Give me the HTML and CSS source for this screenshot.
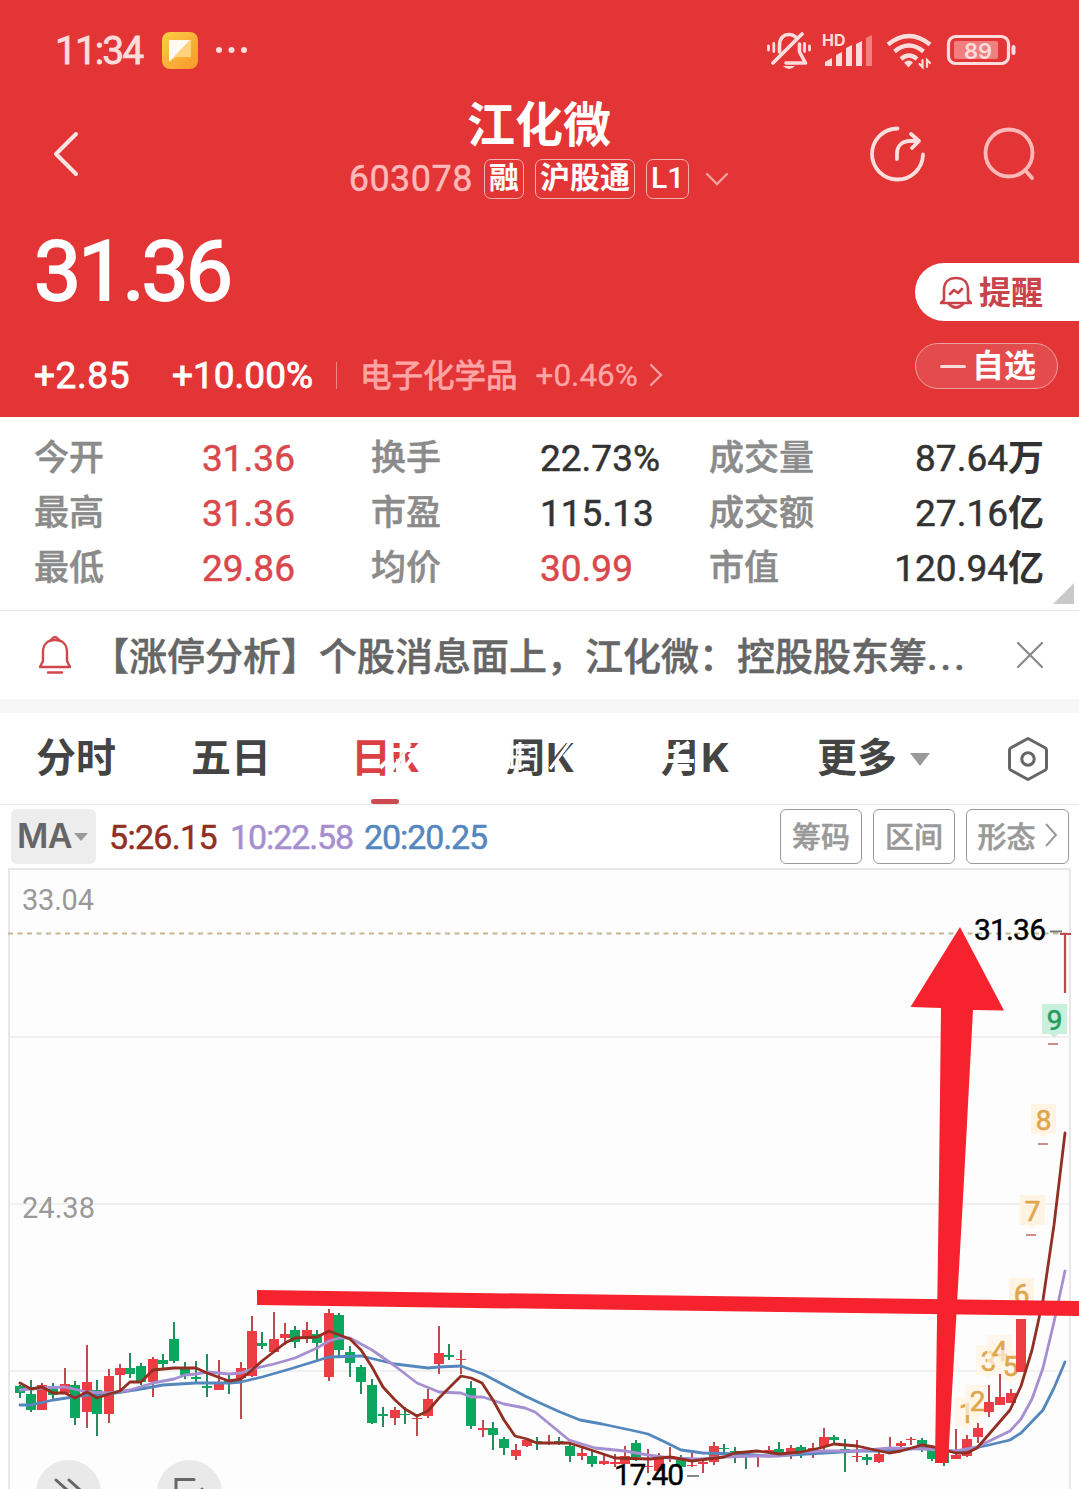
FILE: index.html
```html
<!DOCTYPE html>
<html lang="zh-CN">
<head>
    <meta charset="UTF-8">
    <meta name="viewport" content="width=device-width, initial-scale=1.0">
    <title>江化微 603078</title>
    <link rel="stylesheet" href="styles.css">
</head>
<body>
    <header>
        <div class="status-bar">
            <span class="time">11:34</span>
            <svg class="app-icon" width="36" height="37" viewBox="0 0 36 37">
                <defs>
                    <linearGradient id="sun" x1="0" y1="0" x2="1" y2="1">
                        <stop offset="0" stop-color="#f9cf45"/>
                        <stop offset="1" stop-color="#fb962c"/>
                    </linearGradient>
                </defs>
                <rect width="36" height="37" rx="8" fill="url(#sun)"/>
                <path d="M7 8h22v17H14L7 30z" fill="#ffd27c"/>
                <path d="M7 8h21L7 30z" fill="#fffaf0"/>
            </svg>
            <svg class="dots" width="34" height="8" viewBox="0 0 34 8" fill="#ffdcdc">
                <circle cx="3" cy="4" r="3"/><circle cx="15.500" cy="4" r="3"/><circle cx="28" cy="4" r="3"/>
            </svg>
            <svg class="status-icons" width="252" height="42" viewBox="765 29 252 42" fill="none" stroke="#ffdcdc" stroke-linecap="round">
                <!-- muted bell -->
                <path d="M779.500 52v-6c0-8 4-11.500 9.500-11.500 3 0 5 1 6.500 2.500M799.500 44v8l6 11H786" stroke-width="3.600" stroke-linejoin="round"/>
                <path d="M802 34L773 63" stroke-width="3.800"/>
                <path d="M783 66h12q-6 6-12 0z" fill="#ffdcdc" stroke="none"/>
                <path d="M768.500 46v4M773.800 43.500v8M804.500 43.500v8M809.500 46v4" stroke-width="2.800"/>
                <!-- signal -->
                <g fill="#ffdcdc" stroke="none">
                    <path d="M825 62l7-4v8h-7zM836 55l6-3v14h-6zM846 48l6-3v21h-6zM856 44l6-3v25h-6z"/>
                    <path d="M866 38l6-3v31h-6z" opacity=".45"/>
                </g>
                <!-- wifi -->
                <g stroke-width="4.400">
                    <path d="M888 44.500q21-17 42 0" stroke-linecap="butt"/>
                    <path d="M894.500 51.500q14.500-12 29 0" stroke-linecap="butt"/>
                    <path d="M901 59q8-7 16 0" stroke-linecap="butt"/>
                </g>
                <path d="M904 62.500q5-4 9 0l-4.500 5z" fill="#ffdcdc" stroke="none"/>
                <path d="M922.500 60v7l-3-3M927 67v-7l3 3" stroke-width="2.200"/>
                <!-- battery -->
                <rect x="948.500" y="36.500" width="60" height="27" rx="7" stroke-width="3.200"/>
                <rect x="954" y="41" width="44" height="18" rx="2" fill="#f08080" stroke="none"/>
                <path d="M1013.500 47v6" stroke-width="4"/>
                <text class="hd" x="822" y="46">HD</text>
                <text class="battery" x="964" y="58.500">89</text>
            </svg>
        </div>
        <div class="nav">
            <svg class="back" width="28" height="46" viewBox="0 0 28 46" fill="none" stroke="#ffe4e4" stroke-width="4" stroke-linecap="round" stroke-linejoin="round">
                <path d="M24 3L4 23l20 20"/>
            </svg>
            <div class="title">
                <h1>江化微</h1>
                <div class="code-row">
                    <span class="code">603078</span>
                    <span class="tag">融</span>
                    <span class="tag">沪股通</span>
                    <span class="tag level">L1</span>
                    <svg width="24" height="14" viewBox="0 0 24 14" fill="none" stroke="#f5a0a0" stroke-width="2.400" stroke-linecap="round"><path d="M2 2l10 10L22 2"/></svg>
                </div>
            </div>
            <svg class="share" width="56" height="56" viewBox="0 0 56 56" fill="none" stroke="#ffdede" stroke-width="3.800" stroke-linecap="round">
                <path d="M27.500 2.500A25.500 25.500 0 1 0 53 28.500"/>
                <path d="M27 33v-5c0-9 6-13 13-13h9M41 8l8 7-7 7" stroke-linejoin="round"/>
            </svg>
            <svg class="search" width="54" height="56" viewBox="0 0 54 56" fill="none" stroke="#ffb8b8" stroke-width="3.800" stroke-linecap="round">
                <circle cx="27" cy="27" r="23.500"/>
                <path d="M43 44l7 8"/>
            </svg>
        </div>
        <div class="quote">
            <div class="quote-left">
                <div class="price">31.36</div>
                <div class="change">
                    <span class="diff">+2.85</span>
                    <span class="pct">+10.00%</span>
                    <span class="sector">电子化学品</span>
                    <span class="sector-pct">+0.46%</span>
                    <svg width="14" height="24" viewBox="0 0 14 24" fill="none" stroke="#f5a0a0" stroke-width="2.400" stroke-linecap="round"><path d="M2 2l10 10L2 22"/></svg>
                </div>
            </div>
            <div class="quote-right">
                <div class="pill remind">
                    <svg width="32" height="33" viewBox="0 0 32 33" fill="none" stroke="#c8444a" stroke-width="2.600" stroke-linejoin="round" stroke-linecap="round">
                        <path d="M4 24V14C4 6 9 2 16 2s12 4 12 12v10l3 3H1z"/>
                        <path d="M9 28q7 7 14 0"/>
                        <path d="M10 18l4-4 4 3 4-4"/>
                    </svg>
                    提醒
                </div>
                <div class="pill watch"><i></i>自选</div>
            </div>
        </div>
    </header>

    <section class="metrics">
        <span>今开</span><b class="up">31.36</b><span>换手</span><b>22.73%</b><span>成交量</span><b class="end">87.64<em>万</em></b>
        <span>最高</span><b class="up">31.36</b><span>市盈</span><b>115.13</b><span>成交额</span><b class="end">27.16<em>亿</em></b>
        <span>最低</span><b class="up">29.86</b><span>均价</span><b class="up">30.99</b><span>市值</span><b class="end">120.94<em>亿</em></b>
        <div class="corner"></div>
    </section>

    <section class="notice">
        <svg width="32" height="40" viewBox="0 0 32 40" fill="none" stroke="#d0484e" stroke-width="2.400" stroke-linejoin="round" stroke-linecap="round">
            <path d="M4 26V17C4 9 9 5 16 5s12 4 12 12v9l3 6H1z"/>
            <path d="M12 5q4-6 8 0M9 37.500h14"/>
        </svg>
        <p>【涨停分析】个股消息面上，江化微：控股股东筹<span>...</span></p>
        <svg class="close" width="26" height="26" viewBox="0 0 26 26" stroke="#888" stroke-width="2.200" stroke-linecap="round"><path d="M1 1l24 24M25 1L1 25"/></svg>
    </section>

    <nav class="tabs">
        <span>分时</span>
        <span>五日</span>
        <span class="active">日K</span>
        <span>周K</span>
        <span>月K</span>
        <span>更多<i></i></span>
        <svg class="setting" width="42" height="46" viewBox="0 0 42 46" fill="none" stroke="#666" stroke-width="3" stroke-linejoin="round">
            <path d="M21 2.500L38.500 12q1 1 1 2v18q0 1-1 2L21 43.500 3.500 34q-1-1-1-2V14q0-1 1-2z"/>
            <circle cx="21" cy="23" r="6.200"/>
        </svg>
        <svg class="scratches" width="400" height="50" viewBox="340 735 400 50" fill="none" stroke="#fff" stroke-width="4">
            <path d="M380 768l11-11 2 11 10-12 1 13 9-12M390 750h28M398 759v18M410 744l-6 9"/>
            <path d="M505 747h26M504 757h26M504 767h20M512 739v30M520 742v28M550 769l20-27M508 776l20-4" stroke-width="3"/>
            <path d="M662 751h15l12-9M664 761h30M678 742l-4 35M682 769h10"/>
        </svg>
    </nav>

    <section class="toolbar">
        <span class="ma-select">MA<i></i></span>
        <span class="ma5">5:26.15</span>
        <span class="ma10">10:22.58</span>
        <span class="ma20">20:20.25</span>
        <div class="buttons">
            <button>筹码</button>
            <button>区间</button>
            <button class="wide">形态<svg width="13" height="24" viewBox="0 0 13 24" fill="none" stroke="#999" stroke-width="2"><path d="M1 1l10 11L1 23"/></svg></button>
        </div>
    </section>

    <svg class="chart" id="chart" width="1079" height="622" viewBox="0 867 1079 622">
        <path class="frame" d="M9 1489V869H1070V1489"/>
        <path class="grid" d="M10 1037H1069M10 1204H1069M10 1371H1069"/>
        <text class="axis" x="22" y="910" textLength="72">33.04</text>
        <text class="axis" x="22" y="1218" textLength="73">24.38</text>
        <g id="marks"></g>
        <g id="candles"></g>
        <path class="limit" d="M8 933.500H1072"/>
        <path d="M1050 931.500h12" stroke="#777" stroke-width="2"/>
        <path d="M1060 934h11M1065 934v59" stroke="#bd4b50" stroke-width="2.200"/>
        <g id="lines"></g>
        <text class="extreme" x="974" y="940" textLength="72">31.36</text>
        <text class="extreme" x="614" y="1485" textLength="70">17.40</text>
        <path d="M687 1476h12" stroke="#888" stroke-width="2"/>
        <circle cx="68.500" cy="1492.500" r="32.500" fill="#e9e9e9"/>
        <path class="tool" d="M56 1480l20 18M69 1480l20 18"/>
        <circle cx="189.500" cy="1492.500" r="32.500" fill="#e9e9e9"/>
        <path class="tool" d="M176 1498v-18.500h18M202 1489v8"/>
        <!-- hand drawn resistance line and arrow -->
        <path class="drawn" d="M257 1290L1079 1301V1316L257 1305z"/>
        <path class="drawn" d="M960 927L1004 1010.500 973 1010 964 1180 948 1463H935L939 1180 941 1008 910.500 1007z"/>
    </svg>
    <script src="app.js"></script>
</body>
</html>
```
FILE: styles.css
```css
* {
    box-sizing: border-box;
}

body {
    margin: 0;
    width: 1079px;
    height: 1489px;
    overflow: hidden;
    background: #fff;
    color: #333;
    font-family: Roboto, 'Noto Sans CJK SC', sans-serif;
}

header {
    height: 417px;
    background: #e33536;
    color: #fff;
}

.status-bar {
    display: flex;
    align-items: center;
    height: 96px;
    padding: 4px 62px 0 55px;
}

.time {
    width: 107px;
    padding-top: 2px;
    font-size: 39px;
    letter-spacing: -2px;
    color: #ffdcdc;
    -webkit-text-stroke: .8px;
}

.dots {
    margin-left: 18px;
}

.status-icons {
    margin-left: auto;
}

.hd {
    font: 700 16px Inter, sans-serif;
    fill: #ffdcdc;
    stroke: none;
}

.battery {
    font: 600 22px Inter, sans-serif;
    fill: #ffdcdc;
    stroke: none;
}

.nav {
    display: grid;
    grid-template-columns: 28px 1fr 56px 54px;
    align-items: center;
    height: 108px;
    padding: 8px 43px 0 52px;
}

.title {
    display: flex;
    flex-direction: column;
    align-items: center;
    gap: 6px;
    margin-top: -10px;
    padding-left: 72px;
}

.title h1 {
    margin: 0;
    font-size: 48px;
    line-height: 54px;
    font-weight: 700;
}

.share {
    margin-left: -56px;
}

.code-row {
    display: flex;
    align-items: center;
    gap: 11px;
    height: 40px;
}

.code {
    font-size: 36px;
    letter-spacing: .5px;
    color: #ffb9b9;
    -webkit-text-stroke: .4px;
}

.tag {
    height: 40px;
    padding: 0 4px;
    border: 1.5px solid #f5b0b0;
    border-radius: 7px;
    font-size: 30px;
    line-height: 35px;
    font-weight: 700;
}

.level {
    font-weight: 500;
}

.code-row svg {
    margin-left: 5px;
}

.quote {
    display: flex;
    justify-content: space-between;
    height: 213px;
    padding-left: 34px;
}

.price {
    height: 134px;
    font-size: 84px;
    line-height: 135px;
    letter-spacing: -3px;
    -webkit-text-stroke: 2px;
}

.change {
    display: flex;
    align-items: center;
    height: 74px;
    font-size: 37px;
    -webkit-text-stroke: .8px;
}

.diff {
    width: 138px;
    letter-spacing: .6px;
}

.pct {
    width: 165px;
    height: 27px;
    line-height: 27px;
    border-right: 1px solid #ef8585;
}

.sector {
    margin: -5px 0 0 23px;
    font-size: 31.5px;
    color: #ffa5a5;
}

.sector-pct {
    margin: 0 11px 0 18px;
    font-size: 31.5px;
    color: #ffa5a5;
    -webkit-text-stroke: .3px;
}

.quote-right {
    width: 164px;
    padding-top: 59px;
}

.pill {
    display: flex;
    align-items: center;
    font-size: 32px;
    font-weight: 700;
}

.remind {
    height: 58px;
    padding: 0 0 4px 25px;
    gap: 7px;
    border-radius: 29px 0 0 29px;
    background: #fff;
    color: #c8444a;
}

.remind svg {
    margin-top: 4px;
}

.watch {
    width: 143px;
    height: 46px;
    margin-top: 22px;
    padding: 0 0 6px 24px;
    gap: 6px;
    border: 1.5px solid #f0a0a0;
    border-radius: 23px;
    background: #e44b4c;
}

.watch i {
    width: 26px;
    height: 3px;
    margin-top: 7px;
    border-radius: 2px;
    background: #ffdcdc;
}

.metrics {
    position: relative;
    display: grid;
    grid-template-columns: 168px 169px 169px 169px 120px 1fr;
    grid-auto-rows: 55px;
    align-items: center;
    height: 194px;
    padding: 14px 35px 0 34px;
    border-bottom: 1px solid #e8e8e8;
    font-size: 35px;
    -webkit-text-stroke: .5px;
}

.metrics span {
    color: #8b8b8b;
    font-weight: 500;
    line-height: 50px;
}

.metrics b {
    font-size: 37px;
    font-weight: 400;
    line-height: 50px;
    white-space: nowrap;
}

.metrics .up {
    color: #d9484c;
}

.metrics .end {
    justify-self: end;
}

.metrics em {
    font-size: 36px;
    font-style: normal;
    font-weight: 700;
    -webkit-text-stroke: 0;
}

.corner {
    position: absolute;
    right: 5px;
    bottom: 6px;
    border-left: 21px solid transparent;
    border-bottom: 21px solid #c9c9c9;
}

.notice {
    display: flex;
    align-items: center;
    height: 88px;
    padding: 0 36px 0 39px;
    color: #666;
}

.notice p {
    margin: 0 0 4px 20px;
    font-size: 38px;
    font-weight: 500;
    white-space: nowrap;
    -webkit-text-stroke: .5px;
}

.notice p span {
    letter-spacing: 3px;
}

.close {
    margin-left: auto;
}

.tabs {
    position: relative;
    display: grid;
    grid-template-columns: 155px 160px 155px 155px 156px 190px 42px;
    align-items: center;
    height: 106px;
    padding-left: 36px;
    border-top: 14px solid #f7f7f7;
    border-bottom: 1px solid #e8e8e8;
    font: 700 40px Inter, 'Noto Sans CJK SC', sans-serif;
    color: #444;
}

.tabs span {
    position: relative;
    top: -1px;
    line-height: 56px;
}

.tabs .active {
    color: #dc4045;
}

.tabs .active::after {
    content: '';
    position: absolute;
    left: 20px;
    bottom: -18px;
    width: 28px;
    height: 5px;
    border-radius: 3px;
    background: #cc4a50;
}

.tabs span i {
    display: inline-block;
    margin: 0 0 6px 13px;
    border: 10px solid transparent;
    border-top: 13px solid #999;
    border-bottom: 0;
}

.scratches {
    position: absolute;
    left: 340px;
    top: 22px;
}

.toolbar {
    display: flex;
    align-items: center;
    height: 62px;
    padding: 0 10px 0 11px;
    font-size: 34px;
    letter-spacing: -.7px;
    -webkit-text-stroke: .5px;
}

.ma-select {
    width: 85px;
    height: 55px;
    margin-right: 13px;
    padding-left: 6px;
    border-radius: 6px;
    background: #ededed;
    color: #666;
    font: 600 34px/54px Inter, sans-serif;
    white-space: nowrap;
    -webkit-text-stroke: 0;
}

.ma-select i {
    display: inline-block;
    margin: 0 0 7px 2px;
    border: 7px solid transparent;
    border-top: 8px solid #999;
    border-bottom: 0;
}

.toolbar .ma5,
.toolbar .ma10,
.toolbar .ma20 {
    padding-top: 2px;
}

.toolbar .ma5 {
    width: 121px;
    color: #922f22;
}

.toolbar .ma10 {
    width: 134px;
    letter-spacing: -1.1px;
    color: #a68fd0;
}

.toolbar .ma20 {
    letter-spacing: -1.1px;
    color: #5487bd;
}

.buttons {
    display: flex;
    gap: 11px;
    margin-left: auto;
}

.buttons button {
    display: flex;
    align-items: center;
    justify-content: center;
    width: 82px;
    height: 55px;
    padding: 0 0 3px;
    border: 1px solid #999;
    border-radius: 6px;
    background: #fff;
    color: #999;
    font: 500 29px 'Noto Sans CJK SC', sans-serif;
    -webkit-text-stroke: .5px;
}

.buttons .wide {
    width: 103px;
    gap: 9px;
}

.chart {
    display: block;
}

.frame {
    fill: #fdfdfd;
    stroke: #e8e8e8;
    stroke-width: 2;
}

.grid {
    stroke: #f0f0f0;
    stroke-width: 2;
}

.axis {
    font-size: 29px;
    fill: #999;
}

.limit {
    stroke: #c8b78f;
    stroke-width: 2;
    stroke-dasharray: 5 4.5;
}

.extreme {
    font-size: 30px;
    fill: #000;
    stroke: #000;
    stroke-width: .4px;
}

.tool {
    fill: none;
    stroke: #666;
    stroke-width: 3;
    stroke-linecap: round;
}

.drawn {
    fill: #f6222d;
}

.ma-line {
    fill: none;
    stroke-width: 2.8;
    stroke-linejoin: round;
    stroke-linecap: round;
}

.mark {
    font-size: 28px;
    text-anchor: middle;
    stroke-width: .6px;
}
```
FILE: app.js
```javascript
const NS = 'http://www.w3.org/2000/svg';

// x, high, low, body top, body bottom, direction
const candles = [
    [20,1385,1398,1386,1393,'g'], [31,1380,1412,1394,1410,'g'], [42,1383,1410,1385,1410,'r'],
    [53,1383,1399,1386,1395,'g'], [65,1368,1393,1384,1393,'r'], [75,1381,1425,1385,1418,'g'],
    [87,1345,1428,1382,1412,'r'], [97,1380,1436,1390,1414,'g'], [109,1369,1423,1376,1414,'r'],
    [120,1364,1390,1368,1375,'r'], [130,1353,1378,1368,1374,'g'], [141,1363,1385,1366,1382,'g'],
    [153,1357,1397,1359,1382,'r'], [163,1354,1369,1360,1364,'g'], [174,1322,1363,1339,1361,'g'],
    [185,1362,1379,1368,1375,'g'], [196,1361,1383,1377,1379,'g'], [207,1354,1397,1386,1388,'g'],
    [219,1360,1390,1384,1390,'r'], [229,1375,1394,1380,1382,'g'], [241,1362,1419,1368,1378,'r'],
    [252,1316,1377,1331,1376,'r'], [262,1332,1349,1343,1346,'g'], [274,1312,1352,1339,1352,'r'],
    [285,1323,1345,1334,1338,'r'], [295,1326,1348,1330,1342,'g'], [307,1322,1343,1330,1339,'r'],
    [317,1330,1360,1334,1343,'g'], [329,1309,1381,1313,1377,'r'], [339,1313,1357,1315,1350,'g'],
    [350,1346,1377,1352,1363,'g'], [361,1365,1394,1367,1382,'g'], [372,1379,1424,1385,1423,'g'],
    [383,1407,1427,1414,1416,'g'], [395,1407,1425,1410,1418,'r'], [405,1407,1424,1414,1415,'g'],
    [417,1417,1436,1418,1419,'r'], [428,1389,1418,1399,1416,'r'], [439,1326,1374,1353,1364,'r'],
    [449,1344,1360,1355,1357,'g'], [461,1350,1374,1359,1360,'r'], [471,1381,1429,1388,1426,'g'],
    [483,1420,1437,1428,1430,'r'], [493,1422,1450,1428,1435,'g'], [504,1437,1455,1439,1448,'g'],
    [516,1444,1460,1450,1456,'r'], [527,1439,1447,1440,1446,'r'], [537,1437,1450,1441,1443,'g'],
    [549,1435,1445,1442,1444,'r'], [559,1437,1445,1441,1442,'g'], [570,1442,1462,1446,1456,'g'],
    [582,1448,1460,1453,1456,'r'], [592,1451,1467,1456,1464,'g'], [604,1455,1465,1461,1464,'r'],
    [615,1454,1467,1462,1464,'r'], [625,1446,1464,1456,1464,'r'], [636,1440,1461,1443,1457,'g'],
    [648,1449,1473,1466,1467,'r'], [659,1453,1471,1458,1471,'r'], [670,1447,1462,1456,1457,'r'],
    [681,1455,1468,1460,1467,'g'], [692,1453,1467,1465,1466,'r'], [703,1458,1473,1462,1464,'r'],
    [714,1442,1465,1446,1462,'r'], [724,1444,1453,1448,1449,'g'], [735,1447,1463,1451,1453,'g'],
    [746,1453,1469,1455,1456,'g'], [758,1455,1467,1456,1457,'r'], [769,1446,1453,1450,1453,'r'],
    [779,1442,1454,1449,1453,'g'], [791,1445,1459,1448,1453,'r'], [801,1445,1458,1447,1452,'g'],
    [813,1443,1458,1448,1451,'r'], [824,1428,1453,1437,1447,'r'], [834,1435,1443,1437,1440,'g'],
    [845,1439,1472,1449,1451,'g'], [857,1440,1462,1456,1457,'r'], [867,1454,1465,1457,1460,'g'],
    [879,1451,1463,1454,1462,'r'], [890,1437,1450,1448,1450,'r'], [901,1441,1448,1443,1446,'r'],
    [911,1437,1445,1439,1440,'r'], [922,1438,1452,1440,1445,'g'], [932,1447,1461,1450,1459,'g'],
    [944,1450,1466,1452,1463,'g'], [956,1429,1459,1455,1459,'r'], [967,1435,1457,1439,1456,'r'],
    [978,1423,1443,1428,1437,'r'], [989,1385,1417,1402,1412,'r'], [1000,1374,1405,1397,1405,'r'],
    [1011,1389,1403,1393,1403,'r'], [1021,1319,1372,1319,1372,'r']
];

const averages = [
    ['#5487bd', '20,1405 31,1405 53,1400 87,1395 109,1394 141,1389 163,1385 196,1383 229,1383 241,1382 262,1377 290,1369 329,1357 361,1356 395,1364 428,1368 439,1367 461,1366 483,1374 504,1385 525,1396 540,1403 560,1412 580,1420 602,1424 635,1431 648,1434 665,1442 681,1450 703,1453 740,1454 768,1456 790,1455 824,1453 857,1451 880,1451 922,1448 956,1452 989,1445 1010,1440 1021,1433 1043,1410 1054,1388 1065,1362'],
    ['#a68fd0', '20,1390 42,1388 65,1387 87,1392 109,1393 130,1390 153,1383 174,1379 185,1375 196,1374 207,1372 229,1374 241,1373 252,1369 274,1364 295,1358 317,1348 329,1341 339,1338 350,1338 372,1350 395,1366 417,1383 439,1392 461,1393 471,1397 483,1397 504,1404 525,1408 535,1412 569,1440 595,1448 625,1451 648,1455 670,1458 700,1459 724,1457 757,1456 780,1456 801,1452 824,1451 857,1451 890,1448 922,1449 956,1451 977,1447 1010,1431 1021,1419 1032,1399 1043,1368 1054,1322 1065,1271'],
    ['#922f22', '20,1383 31,1389 42,1387 53,1393 65,1393 75,1398 87,1392 97,1398 109,1394 120,1391 130,1382 141,1382 153,1370 174,1368 196,1368 207,1373 229,1381 241,1379 252,1370 262,1361 280,1347 285,1343 295,1338 317,1337 329,1331 350,1339 361,1350 372,1367 383,1387 395,1400 405,1409 417,1416 428,1411 439,1398 461,1376 471,1378 482,1383 493,1400 504,1420 515,1436 527,1439 537,1443 569,1443 582,1447 615,1458 650,1459 670,1457 692,1461 724,1457 735,1453 757,1451 780,1454 801,1452 820,1448 834,1444 857,1446 889,1453 901,1451 922,1445 934,1447 956,1453 967,1453 977,1448 1010,1410 1021,1386 1032,1350 1043,1300 1054,1225 1065,1133']
];

// label, left, top
const marks = [
    [1, 954, 1397], [3, 976, 1345], [2, 965, 1385], [4, 987, 1335], [5, 998, 1350],
    [6, 1009, 1278], [7, 1020, 1195], [8, 1031, 1104], [9, 1042, 1004]
];

function add(parent, tag, attrs, text) {
    const el = document.createElementNS(NS, tag);
    for (const key in attrs) el.setAttribute(key, attrs[key]);
    if (text !== undefined) el.textContent = text;
    document.getElementById(parent).appendChild(el);
}

candles.forEach(([x, high, low, top, bottom, dir]) => {
    const wick = dir === 'r' ? '#bd4b50' : '#268b5c';
    const body = dir === 'r' ? '#ec3d44' : '#0ca65e';
    add('candles', 'path', { d: `M${x} ${high}V${low}`, stroke: wick, 'stroke-width': 2 });
    add('candles', 'rect', { x: x - 5, y: top, width: 10, height: bottom - top, fill: body });
});

marks.forEach(([n, x, y]) => {
    const green = n === 9;
    const fill = green ? '#c9f0dd' : '#fff3e4';
    const color = green ? '#269c62' : '#dfa64c';
    add('marks', 'path', { d: `M${x} ${y}h25v30h-9l-4 4-4-4h-8z`, fill, opacity: n < 6 ? 0.7 : 1 });
    add('marks', 'text', { class: 'mark', x: x + 12.5, y: y + 26, fill: color, stroke: color }, n);
});

// one-price limit-up days
[[1031, 1235], [1043, 1144], [1053, 1044]].forEach(([x, y]) => {
    add('marks', 'path', { d: `M${x - 5} ${y}h10`, stroke: '#d08b8b', 'stroke-width': 2 });
});

averages.forEach(([color, points]) => {
    add('lines', 'polyline', { class: 'ma-line', points, stroke: color });
});
```
